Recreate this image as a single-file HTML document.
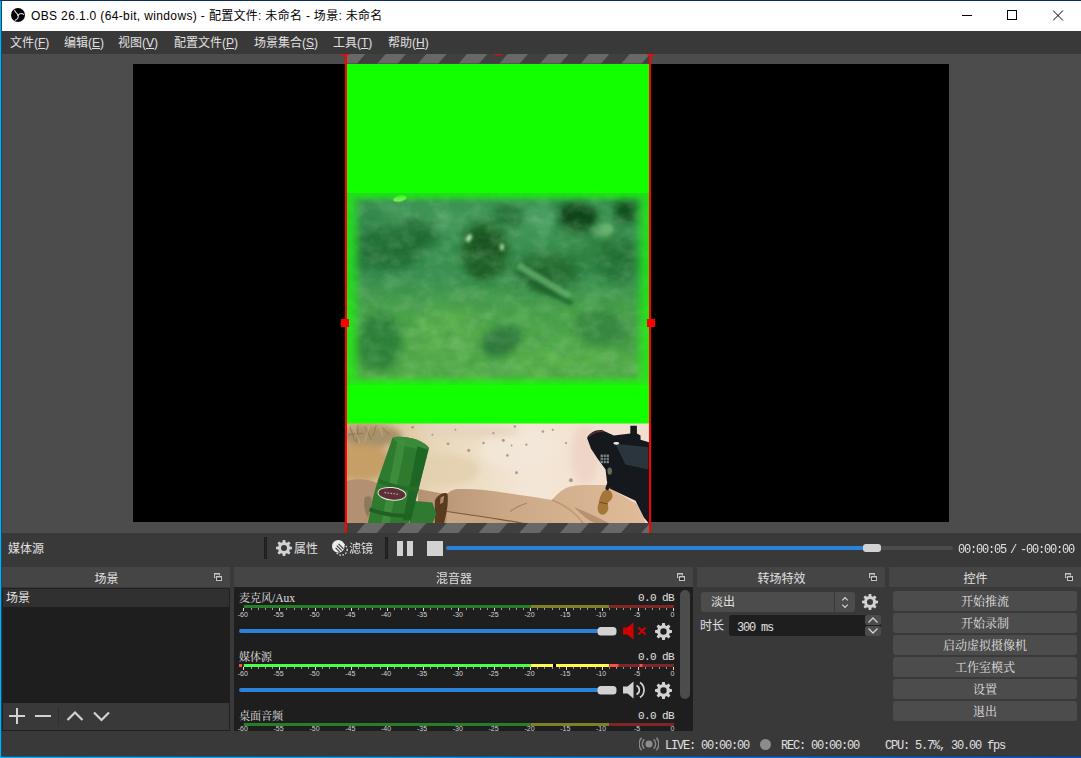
<!DOCTYPE html>
<html lang="zh-CN">
<head>
<meta charset="utf-8">
<title>OBS 26.1.0 (64-bit, windows) - 配置文件: 未命名 - 场景: 未命名</title>
<style>
*{box-sizing:border-box;margin:0;padding:0}
html,body{width:1081px;height:758px;overflow:hidden;background:#3a3939}
body{position:relative;font-family:"Liberation Sans","Noto Sans CJK SC",sans-serif;font-size:12px;color:#e1e0e1;line-height:1}
.abs{position:absolute}
#win{position:absolute;left:0;top:0;width:1081px;height:758px;background:#3a3939;overflow:hidden}
/* window borders */
#bt{left:0;top:0;width:1081px;height:1px;background:#0a2e5a}
#bl{left:0;top:1px;width:1px;height:757px;background:#00b2fd}
#bl2{left:1px;top:1px;width:1px;height:756px;background:#1c4a62}
#bb{left:0;top:757px;width:1081px;height:1px;background:linear-gradient(90deg,#00b4ff,#00a2f4 30%,#0070dc 67%,#0a52c8 100%)}
#bb2{left:1px;top:756px;width:1080px;height:1px;background:linear-gradient(90deg,#1c5a80,#1c5580 30%,#1c4a78 67%,#1c4070 100%)}
/* title */
#title{left:1px;top:1px;width:1080px;height:30px;background:#fff;color:#000}
#title .txt{position:absolute;left:30px;top:9.3px;font-size:12px;white-space:nowrap;letter-spacing:0}
/* menu */
#menu{left:1px;top:31px;width:1080px;height:23px;background:#3a3939}
#menu span{position:absolute;top:6.2px;font-size:12px;white-space:nowrap;color:#e1e0e1}
#menu u{text-decoration:underline;text-underline-offset:0.5px}
/* preview */
#pv{left:2px;top:54px;width:1079px;height:479px;background:#4c4c4c;overflow:hidden}
#canvas{left:131px;top:10px;width:816px;height:458px;background:#000}
.dock-t{position:absolute;height:20px;background:#464546;text-align:center;font-size:12px;line-height:20px;color:#e1e0e1;padding-right:19px}
.dock-t span{position:relative;top:1.5px}
.dark{background:#1f1e1f}
.btn{position:absolute;left:893px;width:184px;height:20px;background:#4c4c4c;border-radius:3px;text-align:center;line-height:20px;font-size:12px;font-family:"Noto Serif CJK SC","Liberation Serif",serif}
.song{font-family:"Noto Serif CJK SC","Liberation Serif",serif}
.mono{font-family:"Liberation Mono",monospace;font-size:12px;letter-spacing:-1.2px;white-space:pre;margin-top:1.5px}
</style>
</head>
<body>
<div id="win">
  <div id="title" class="abs">
    <svg class="abs" style="left:10px;top:7px" width="14" height="14" viewBox="0 0 14 14"><circle cx="7" cy="7" r="7" fill="#000"/><g fill="none" stroke="#e4e4e4" stroke-width="1.05" stroke-linecap="round"><path d="M7 7.300 C6.600 5.300 4.200 5 3.700 2.300"/><path d="M7 7.300 C8.400 5.600 10.800 5 12.700 6.400"/><path d="M7 7.300 C7.800 9.400 6.400 11.300 4.200 12.300"/></g></svg>
    <span class="txt"><span style="letter-spacing:.36px">OBS 26.1.0 (64-bit, windows) - </span><span style="letter-spacing:.3px">配置文件: 未命名 - 场景: 未命名</span></span>
    <svg class="abs" style="left:961px;top:14px" width="10" height="1"><rect width="10" height="1" fill="#000"/></svg>
    <svg class="abs" style="left:1006px;top:9px" width="10" height="10"><rect x=".5" y=".5" width="9" height="9" fill="none" stroke="#000" stroke-width="1"/></svg>
    <svg class="abs" style="left:1052px;top:9px" width="11" height="11"><path d="M0 .5 L10 10.500 M10 .5 L0 10.500" stroke="#000" stroke-width="1" fill="none"/></svg>
  </div>
  <div id="menu" class="abs">
    <span style="left:9px">文件(<u>F</u>)</span>
    <span style="left:63px">编辑(<u>E</u>)</span>
    <span style="left:117px">视图(<u>V</u>)</span>
    <span style="left:173px">配置文件(<u>P</u>)</span>
    <span style="left:253px">场景集合(<u>S</u>)</span>
    <span style="left:332px">工具(<u>T</u>)</span>
    <span style="left:387px">帮助(<u>H</u>)</span>
  </div>
  <div id="pv" class="abs">
    <div id="canvas" class="abs"></div>
<!--PV-START--><svg class="abs" style="left:0;top:0" width="1079" height="479" viewBox="2 54 1079 479">
<defs>
<clipPath id="cs"><rect x="345" y="54" width="306" height="479"/></clipPath>
<clipPath id="cv"><rect x="347" y="193" width="302" height="192"/></clipPath>
<clipPath id="cp"><rect x="347" y="423.5" width="302" height="99.5"/></clipPath>
<filter id="b8" x="-20%" y="-20%" width="140%" height="140%"><feGaussianBlur stdDeviation="6"/></filter>
<filter id="b4" x="-20%" y="-20%" width="140%" height="140%"><feGaussianBlur stdDeviation="3"/></filter>
<filter id="b2" x="-20%" y="-20%" width="140%" height="140%"><feGaussianBlur stdDeviation="1.5"/></filter>
<filter id="b1" x="-20%" y="-20%" width="140%" height="140%"><feGaussianBlur stdDeviation="0.7"/></filter>
<filter id="fe" x="-5%" y="-5%" width="110%" height="110%"><feGaussianBlur stdDeviation="4 2.7"/></filter>
<mask id="mv" maskUnits="userSpaceOnUse" x="340" y="185" width="320" height="210"><rect x="347" y="193" width="302" height="192" fill="#505050"/><rect x="356" y="199" width="284" height="180" fill="#fff" filter="url(#fe)"/></mask>
<linearGradient id="gv" x1="0" y1="0" x2="0" y2="1"><stop offset="0" stop-color="#3c9556"/><stop offset=".45" stop-color="#3a9150"/><stop offset=".6" stop-color="#4aa34a"/><stop offset="1" stop-color="#58b248"/></linearGradient>
<linearGradient id="gs" x1="0" y1="0" x2="1" y2="0"><stop offset="0" stop-color="#cfae7c"/><stop offset=".3" stop-color="#e9d8bb"/><stop offset=".6" stop-color="#f4e6d6"/><stop offset="1" stop-color="#f1dece"/></linearGradient>
<linearGradient id="gb" gradientUnits="userSpaceOnUse" x1="420" y1="0" x2="640" y2="0"><stop offset="0" stop-color="#b49272"/><stop offset=".4" stop-color="#cba886"/><stop offset="1" stop-color="#dfbb99"/></linearGradient>
<filter id="nz" x="0" y="0" width="100%" height="100%"><feTurbulence type="fractalNoise" baseFrequency="0.07 0.09" numOctaves="3" seed="7"/><feColorMatrix type="matrix" values="0 0 0 0 0.05  0 0 0 0 0.25  0 0 0 0 0.08  1.6 0 0 0 -0.55"/></filter>
<filter id="nz2" x="0" y="0" width="100%" height="100%"><feTurbulence type="fractalNoise" baseFrequency="0.06 0.08" numOctaves="3" seed="23"/><feColorMatrix type="matrix" values="0 0 0 0 0.55  0 0 0 0 0.85  0 0 0 0 0.5  0 1.6 0 0 -0.62"/></filter>
</defs>
<g clip-path="url(#cs)">
<rect x="345" y="54" width="306" height="10" fill="#404040"/><rect x="345" y="523" width="306" height="10" fill="#404040"/>
<g fill="#686868"><path d="M263.67 54 L284.00 54 L275.30 64 L254.97 64Z"/><path d="M304.33 54 L324.67 54 L315.97 64 L295.63 64Z"/><path d="M345.00 54 L365.33 54 L356.63 64 L336.30 64Z"/><path d="M385.67 54 L406.00 54 L397.30 64 L376.97 64Z"/><path d="M426.33 54 L446.67 54 L437.97 64 L417.63 64Z"/><path d="M467.00 54 L487.33 54 L478.63 64 L458.30 64Z"/><path d="M507.67 54 L528.00 54 L519.30 64 L498.97 64Z"/><path d="M548.33 54 L568.67 54 L559.97 64 L539.63 64Z"/><path d="M589.00 54 L609.33 54 L600.63 64 L580.30 64Z"/><path d="M629.67 54 L650.00 54 L641.30 64 L620.97 64Z"/><path d="M283.97 523 L304.30 523 L295.60 533 L275.27 533Z"/><path d="M324.63 523 L344.97 523 L336.27 533 L315.93 533Z"/><path d="M365.30 523 L385.63 523 L376.93 533 L356.60 533Z"/><path d="M405.97 523 L426.30 523 L417.60 533 L397.27 533Z"/><path d="M446.63 523 L466.97 523 L458.27 533 L437.93 533Z"/><path d="M487.30 523 L507.63 523 L498.93 533 L478.60 533Z"/><path d="M527.97 523 L548.30 523 L539.60 533 L519.27 533Z"/><path d="M568.63 523 L588.97 523 L580.27 533 L559.93 533Z"/><path d="M609.30 523 L629.63 523 L620.93 533 L600.60 533Z"/><path d="M649.97 523 L670.30 523 L661.60 533 L641.27 533Z"/></g>
<rect x="347" y="64" width="302" height="459" fill="#12ff00"/>
<rect x="347" y="63" width="302" height="1" fill="#5a3d5a" opacity=".6"/>
<g mask="url(#mv)"><g clip-path="url(#cv)">
<rect x="340" y="185" width="320" height="210" fill="url(#gv)"/>
<g filter="url(#b8)">
<ellipse cx="392" cy="246" rx="34" ry="20" fill="#1d6631" opacity="0.9"/>
<ellipse cx="428" cy="232" rx="12" ry="14" fill="#1a5f2c" opacity="0.8"/>
<ellipse cx="372" cy="262" rx="16" ry="10" fill="#1d6631" opacity="0.7"/>
<ellipse cx="485" cy="250" rx="24" ry="30" fill="#16581e" opacity="0.9"/>
<ellipse cx="577" cy="217" rx="20" ry="15" fill="#0c4214" opacity="0.95"/>
<ellipse cx="626" cy="211" rx="12" ry="13" fill="#124f1a" opacity="0.9"/>
<ellipse cx="547" cy="272" rx="32" ry="20" fill="#1d642b" opacity="0.85"/>
<ellipse cx="620" cy="262" rx="18" ry="22" fill="#1f6a30" opacity="0.7"/>
<ellipse cx="600" cy="255" rx="30" ry="22" fill="#2a7836" opacity="0.6"/>
<ellipse cx="378" cy="343" rx="22" ry="30" fill="#2a7a36" opacity="0.7"/>
<ellipse cx="498" cy="342" rx="18" ry="15" fill="#2b7a3a" opacity="0.7"/>
<ellipse cx="606" cy="330" rx="30" ry="20" fill="#36883a" opacity="0.6"/>
<ellipse cx="450" cy="330" rx="40" ry="22" fill="#5aae4a" opacity="0.6"/>
<ellipse cx="560" cy="360" rx="60" ry="16" fill="#58b048" opacity="0.6"/>
<ellipse cx="430" cy="215" rx="50" ry="12" fill="#469c5c" opacity="0.5"/>
<ellipse cx="520" cy="222" rx="18" ry="18" fill="#4c9c60" opacity="0.5"/>
<ellipse cx="372" cy="225" rx="14" ry="20" fill="#2c7a40" opacity="0.5"/>
</g>
<g filter="url(#b4)">
<ellipse cx="579" cy="216" rx="16" ry="11" fill="#0c4216" opacity="0.9" transform="rotate(15 579 216)"/>
<ellipse cx="625" cy="212" rx="9" ry="11" fill="#12501c" opacity="0.85" transform="rotate(0 625 212)"/>
<ellipse cx="509" cy="216" rx="15" ry="11" fill="#1c6230" opacity="0.7" transform="rotate(10 509 216)"/>
<ellipse cx="485" cy="245" rx="14" ry="13" fill="#144f1c" opacity="0.85" transform="rotate(0 485 245)"/>
<ellipse cx="480" cy="268" rx="12" ry="9" fill="#1a5a24" opacity="0.7" transform="rotate(0 480 268)"/>
<ellipse cx="412" cy="226" rx="11" ry="10" fill="#1f6834" opacity="0.75" transform="rotate(0 412 226)"/>
<ellipse cx="368" cy="240" rx="9" ry="8" fill="#1f6834" opacity="0.7" transform="rotate(0 368 240)"/>
<ellipse cx="397" cy="261" rx="20" ry="10" fill="#246f38" opacity="0.7" transform="rotate(-8 397 261)"/>
<ellipse cx="615" cy="256" rx="18" ry="20" fill="#226c32" opacity="0.6" transform="rotate(20 615 256)"/>
<ellipse cx="542" cy="280" rx="24" ry="9" fill="#1a5c26" opacity="0.75" transform="rotate(32 542 280)"/>
<ellipse cx="380" cy="342" rx="20" ry="26" fill="#2a7a34" opacity="0.6" transform="rotate(10 380 342)"/>
<ellipse cx="502" cy="341" rx="20" ry="13" fill="#266f36" opacity="0.7" transform="rotate(-20 502 341)"/>
<ellipse cx="600" cy="327" rx="26" ry="16" fill="#31823a" opacity="0.6" transform="rotate(10 600 327)"/>
<ellipse cx="543" cy="219" rx="13" ry="14" fill="#58aa70" opacity="0.6" transform="rotate(0 543 219)"/>
<ellipse cx="604" cy="230" rx="9" ry="8" fill="#6ab872" opacity="0.7" transform="rotate(0 604 230)"/>
<ellipse cx="446" cy="222" rx="16" ry="11" fill="#4a9e62" opacity="0.5" transform="rotate(0 446 222)"/>
<ellipse cx="442" cy="338" rx="34" ry="28" fill="#5eb24e" opacity="0.55" transform="rotate(0 442 338)"/>
<ellipse cx="542" cy="363" rx="26" ry="11" fill="#5cb44c" opacity="0.6" transform="rotate(0 542 363)"/>
<ellipse cx="470" cy="300" rx="60" ry="10" fill="#4da452" opacity="0.4" transform="rotate(0 470 300)"/>
</g>
<rect x="347" y="190" width="302" height="198" filter="url(#nz)" opacity=".4"/><rect x="347" y="190" width="302" height="198" filter="url(#nz2)" opacity=".22"/>
<ellipse cx="400" cy="198.5" rx="7" ry="3" fill="#98e868" filter="url(#b1)" transform="rotate(-12 400 198.5)"/>
<g filter="url(#b2)"><ellipse cx="469" cy="238" rx="2.500" ry="4" fill="#b8e0b0" transform="rotate(25 469 238)"/><ellipse cx="502" cy="247" rx="2" ry="3.500" fill="#a8d8a0"/><ellipse cx="607" cy="229" rx="6" ry="5" fill="#6ab070"/><path d="M520 262 L572 294 L566 298 L516 268Z" fill="#62b26a" opacity=".8"/><path d="M530 278 L575 302 L570 306 L526 284Z" fill="#1f6428" opacity=".7"/></g>
</g></g>
</g>
<g clip-path="url(#cp)">
<rect x="347" y="423" width="302" height="101" fill="url(#gs)"/>
<g filter="url(#b4)">
<ellipse cx="372" cy="436" rx="30" ry="11" fill="#a8916a"/>
<ellipse cx="362" cy="462" rx="30" ry="18" fill="#c59f66"/>
<ellipse cx="440" cy="470" rx="40" ry="16" fill="#e2cfae" opacity=".8"/>
<ellipse cx="585" cy="455" rx="14" ry="30" fill="#edd2c6" opacity=".8"/>
<ellipse cx="520" cy="450" rx="40" ry="20" fill="#f3e7da" opacity=".8"/>
<ellipse cx="470" cy="432" rx="50" ry="6" fill="#e4d3bb" opacity=".8"/>
</g>
<!-- sandbags unified (page coords) -->
<path d="M418 489 L445 494 L448 493 C452 490 455 489 458 489 C475 488.500 490 490.500 503 492.500 L537 497.500 L552 500 C558 493 563 488.500 570 486.700 C576 485.300 582 485 587 485 L606 485 C610 487 613 490 616 492 L637 504 L646 524 L418 524Z" fill="url(#gb)"/>
<path d="M447 511.500 C470 515 500 519 524 523.500 L447 524Z" fill="#c9a683"/>
<path d="M447 511.500 C470 515 500 519 524 523.500" stroke="#7a5a3c" stroke-width="1.200" fill="none"/>
<path d="M510 511.500 C516 507 522 504.500 527 503" stroke="#a98663" stroke-width="1.200" fill="none"/>
<path d="M552 500 C562 504 570 509 576 515 C580 519 582 522 584 524" stroke="#b8926e" stroke-width="1.500" fill="none" opacity=".8"/>
<path d="M574 507 C580 514 588 520 596 524 L610 524 C600 518 586 512 574 507Z" fill="#b08a66" opacity=".8"/>
<g transform="translate(340,415) scale(0.164948)">
 <!-- left sandbag -->
 <path d="M40 400 C100 380 190 390 240 420 L200 660 L40 660Z" fill="#b39072"/>
 <path d="M150 500 C180 480 200 500 190 540 L170 620 C150 600 140 540 150 500Z" fill="#8e7a5a" filter="url(#b2)"/>
 <!-- bracket plate -->
 <path d="M575 520 C590 480 640 460 652 480 C660 540 640 620 630 660 L575 660Z" fill="#5b3b1f"/>
 <path d="M610 500 L632 490 L625 530 L606 540Z" fill="#b08c62"/>
 <path d="M440 520 L560 530 L585 600 L560 660 L420 660Z" fill="#2f7a30"/>
 <!-- tube -->
 <path d="M318 140 C350 118 500 140 540 200 L478 440 L430 620 L415 660 L168 660 L200 500 L228 400Z" fill="#2e7b2f"/>
 <path d="M318 140 C350 118 500 140 540 200 C500 215 360 200 318 140Z" fill="#3a8a3a"/>
 <path d="M350 150 L400 150 L300 660 L250 660Z" fill="#3f9140" opacity=".8" filter="url(#b2)"/>
 <path d="M470 190 L535 210 L430 640 L380 640Z" fill="#1f6424" opacity=".85" filter="url(#b2)"/>
 <path d="M236 385 C300 420 420 440 480 436 L474 462 C410 462 290 440 232 410Z" fill="#256c28"/>
 <path d="M182 560 C260 590 360 605 438 598 L432 622 C350 628 250 612 176 584Z" fill="#215f25"/>
 <ellipse cx="315" cy="478" rx="85" ry="38" fill="#5c3036" stroke="#e8e8e0" stroke-width="6" transform="rotate(6 315 478)"/>
 <path d="M270 470 L360 482" stroke="#b89aa0" stroke-width="8" stroke-dasharray="10 8"/>
 <!-- grass strands -->
 <g stroke="#7d6a48" stroke-width="5" opacity=".7"><path d="M60 70 L90 160M110 60 L100 170M150 70 L190 150M220 60 L200 130M260 80 L300 120M50 120 L140 110"/></g>
 <g stroke="#d8c8a0" stroke-width="4" opacity=".7"><path d="M80 70 L120 170M180 60 L150 160M240 70 L260 130"/></g>
 <g fill="#9a8468" opacity=".7"><circle cx="655" cy="175" r="9"/><circle cx="560" cy="120" r="6"/><circle cx="870" cy="170" r="8"/><circle cx="930" cy="110" r="7"/><circle cx="440" cy="75" r="9"/><circle cx="700" cy="90" r="6"/><circle cx="780" cy="215" r="10"/></g>
</g>
<g transform="translate(500,415) scale(0.164948)">
 <g fill="#8a7560" opacity=".65"><circle cx="20" cy="155" r="9"/><circle cx="45" cy="245" r="8"/><circle cx="100" cy="350" r="9"/><circle cx="160" cy="180" r="7"/><circle cx="260" cy="100" r="8"/><circle cx="320" cy="90" r="7"/><circle cx="90" cy="70" r="8"/><circle cx="400" cy="170" r="7"/><circle cx="430" cy="395" r="12"/><circle cx="70" cy="185" r="6"/></g>
 <!-- fingers -->
 <path d="M620 470 C640 440 680 450 682 490 C680 520 660 520 650 540 C665 560 655 600 620 605 C590 600 585 560 600 530 C605 500 610 490 620 470Z" fill="#a67538"/>
 <path d="M600 528 L655 540" stroke="#6a4a22" stroke-width="6"/>
 <!-- gun -->
 <path d="M528 140 C540 110 580 88 620 92 L690 125 L790 112 L790 65 L830 65 L830 112 L852 125 L852 150 L905 165 L905 660 L872 622 L822 520 L700 462 L665 445 L648 400 L640 330 L590 262 L552 205 Z" fill="#15191d"/>
 <path d="M700 175 L900 195 L900 330 L760 300 Z" fill="#2a363e" filter="url(#b2)"/>
 <path d="M668 395 L650 445" stroke="#15191d" stroke-width="22" stroke-linecap="round"/>
 <rect x="610" y="240" width="50" height="52" fill="#9aa4a4" opacity=".8"/>
 <path d="M610 258H660M610 275H660M627 240V292M644 240V292" stroke="#15191d" stroke-width="5"/>
 <ellipse cx="705" cy="172" rx="18" ry="8" fill="#e8ecec"/>
 <ellipse cx="665" cy="340" rx="14" ry="22" fill="#6a6a5a"/>
 <path d="M540 130 C560 105 600 95 630 100" stroke="#5a3030" stroke-width="8" fill="none"/>
</g>
</g>

<g fill="#ff0000"><rect x="345" y="54" width="2" height="479"/><rect x="649" y="54" width="2" height="479"/>
<rect x="341" y="54" width="8" height="1"/><rect x="494" y="54" width="8" height="1"/><rect x="647" y="54" width="8" height="1"/>
<rect x="341" y="319" width="8" height="8"/><rect x="647" y="319" width="8" height="8"/></g>
</svg><!--PV-END-->
  </div>
  <!--UI-START-->
<div class="abs" style="left:8px;top:543px;font-size:12px;white-space:nowrap">媒体源</div>
<div class="abs" style="left:264px;top:537px;width:3px;height:22px;background:#2a2a2a;border:1px solid #1c1c1c"></div>
<svg class="abs" style="left:276px;top:540px" width="16" height="16" viewBox="0 0 16 16"><path d="M6.45 2.20 L6.73 -0.00 L9.27 -0.00 L9.55 2.20 L11.00 2.80 L12.76 1.45 L14.55 3.24 L13.20 5.00 L13.80 6.45 L16.00 6.73 L16.00 9.27 L13.80 9.55 L13.20 11.00 L14.55 12.76 L12.76 14.55 L11.00 13.20 L9.55 13.80 L9.27 16.00 L6.73 16.00 L6.45 13.80 L5.00 13.20 L3.24 14.55 L1.45 12.76 L2.80 11.00 L2.20 9.55 L-0.00 9.27 L-0.00 6.73 L2.20 6.45 L2.80 5.00 L1.45 3.24 L3.24 1.45 L5.00 2.80Z M11.00 8 A3.0 3.0 0 1 0 5.00 8 A3.0 3.0 0 1 0 11.00 8Z" fill="#d2d2d2" fill-rule="evenodd"/></svg>
<div class="abs" style="left:294px;top:543px;font-size:12px;white-space:nowrap">属性</div>
<svg class="abs" style="left:332px;top:540px" width="16" height="16" viewBox="0 0 16 16"><circle cx="9.500" cy="9.500" r="5.700" fill="none" stroke="#e0e0e0" stroke-width="1.300" stroke-dasharray="1.600 1.500"/><circle cx="6.300" cy="6.300" r="6.300" fill="#ececec"/><g stroke="#3a3939" stroke-width="1.200" stroke-linecap="butt"><path d="M6.500 3.800 L11.500 8.800M4.800 5.600 L9.800 10.600M3.600 7.900 L7.600 11.900"/></g></svg>
<div class="abs" style="left:349px;top:543px;font-size:12px;white-space:nowrap">滤镜</div>
<div class="abs" style="left:385px;top:537px;width:3px;height:22px;background:#2a2a2a;border:1px solid #1c1c1c"></div>
<div class="abs" style="left:397px;top:540.5px;width:6px;height:15px;background:#d2d2d2"></div>
<div class="abs" style="left:407px;top:540.5px;width:6px;height:15px;background:#d2d2d2"></div>
<div class="abs" style="left:427px;top:540.5px;width:15.5px;height:15px;background:#d2d2d2"></div>
<div class="abs" style="left:446px;top:546px;width:507px;height:4px;background:#4c4c4c;border-radius:2px"></div>
<div class="abs" style="left:446px;top:546px;width:420px;height:4px;background:#2a82da;border-radius:2px"></div>
<div class="abs" style="left:863px;top:544px;width:18px;height:8px;background:#d2d2d2;border-radius:3px"></div>
<div class="abs mono" style="left:958px;top:542px;word-spacing:-2px">00:00:05 / -00:00:00</div>
<div class="dock-t" style="left:2px;top:567px;width:228px"><span>场景</span></div>
<svg class="abs" style="left:214px;top:573px" width="9" height="9" viewBox="0 0 9 9"><rect x="0" y="0" width="6" height="5" fill="#c4c4c4"/><rect x="1" y="1.500" width="4" height="2.500" fill="#464546"/><rect x="1.500" y="2.500" width="7" height="6" fill="#464546"/><rect x="2" y="3" width="6" height="5" fill="#c4c4c4"/><rect x="3" y="4.500" width="4" height="2.500" fill="#2e2e2e"/></svg>
<div class="dock-t" style="left:234px;top:567px;width:459px"><span>混音器</span></div>
<svg class="abs" style="left:677px;top:573px" width="9" height="9" viewBox="0 0 9 9"><rect x="0" y="0" width="6" height="5" fill="#c4c4c4"/><rect x="1" y="1.500" width="4" height="2.500" fill="#464546"/><rect x="1.500" y="2.500" width="7" height="6" fill="#464546"/><rect x="2" y="3" width="6" height="5" fill="#c4c4c4"/><rect x="3" y="4.500" width="4" height="2.500" fill="#2e2e2e"/></svg>
<div class="dock-t" style="left:697px;top:567px;width:188px"><span>转场特效</span></div>
<svg class="abs" style="left:869px;top:573px" width="9" height="9" viewBox="0 0 9 9"><rect x="0" y="0" width="6" height="5" fill="#c4c4c4"/><rect x="1" y="1.500" width="4" height="2.500" fill="#464546"/><rect x="1.500" y="2.500" width="7" height="6" fill="#464546"/><rect x="2" y="3" width="6" height="5" fill="#c4c4c4"/><rect x="3" y="4.500" width="4" height="2.500" fill="#2e2e2e"/></svg>
<div class="dock-t" style="left:889px;top:567px;width:192px"><span>控件</span></div>
<svg class="abs" style="left:1065px;top:573px" width="9" height="9" viewBox="0 0 9 9"><rect x="0" y="0" width="6" height="5" fill="#c4c4c4"/><rect x="1" y="1.500" width="4" height="2.500" fill="#464546"/><rect x="1.500" y="2.500" width="7" height="6" fill="#464546"/><rect x="2" y="3" width="6" height="5" fill="#c4c4c4"/><rect x="3" y="4.500" width="4" height="2.500" fill="#2e2e2e"/></svg>
<div class="abs" style="left:2px;top:588px;width:228px;height:143px;background:#3a3939;border:1px solid #212121"></div>
<div class="abs dark" style="left:3px;top:589px;width:226px;height:114px"></div>
<div class="abs" style="left:3px;top:589px;width:226px;height:18px;background:#303030"></div>
<div class="abs" style="left:6px;top:592px;font-size:12px;white-space:nowrap">场景</div>
<svg class="abs" style="left:3px;top:703px" width="226" height="27" viewBox="3 703 226 27"><g stroke="#d2d2d2" stroke-width="2" fill="none"><path d="M9 716H25M17 708V724"/><path d="M35 716H51"/><path d="M67.500 720 L75 712.500 L82.500 720" stroke-width="2.200"/><path d="M94 712.500 L101.500 720 L109 712.500" stroke-width="2.200"/></g><rect x="58" y="707" width="1" height="19" fill="#2e2e2e"/></svg>
<div class="abs dark" style="left:234px;top:587px;width:459px;height:144px;overflow:hidden">
<svg class="abs" style="left:0;top:0" width="459" height="144" viewBox="234 587 459 144">
<rect x="243.8" y="605" width="286.7" height="3" fill="#267f26"/><rect x="530.5" y="605" width="78.8" height="3" fill="#7f7f26"/><rect x="609.3" y="605" width="64.5" height="3" fill="#7f2626"/><rect x="243" y="608" width="1" height="3" fill="#dcdcdc"/><text x="242.8" y="617" text-anchor="middle" font-size="7" fill="#d2d2d2" font-family="Liberation Sans,sans-serif">-60</text><rect x="251" y="608" width="1" height="2" fill="#9a9a9a"/><rect x="258" y="608" width="1" height="2" fill="#9a9a9a"/><rect x="265" y="608" width="1" height="2" fill="#9a9a9a"/><rect x="272" y="608" width="1" height="2" fill="#9a9a9a"/><rect x="279" y="608" width="1" height="3" fill="#dcdcdc"/><text x="278.6" y="617" text-anchor="middle" font-size="7" fill="#d2d2d2" font-family="Liberation Sans,sans-serif">-55</text><rect x="286" y="608" width="1" height="2" fill="#9a9a9a"/><rect x="294" y="608" width="1" height="2" fill="#9a9a9a"/><rect x="301" y="608" width="1" height="2" fill="#9a9a9a"/><rect x="308" y="608" width="1" height="2" fill="#9a9a9a"/><rect x="315" y="608" width="1" height="3" fill="#dcdcdc"/><text x="314.5" y="617" text-anchor="middle" font-size="7" fill="#d2d2d2" font-family="Liberation Sans,sans-serif">-50</text><rect x="322" y="608" width="1" height="2" fill="#9a9a9a"/><rect x="329" y="608" width="1" height="2" fill="#9a9a9a"/><rect x="337" y="608" width="1" height="2" fill="#9a9a9a"/><rect x="344" y="608" width="1" height="2" fill="#9a9a9a"/><rect x="351" y="608" width="1" height="3" fill="#dcdcdc"/><text x="350.3" y="617" text-anchor="middle" font-size="7" fill="#d2d2d2" font-family="Liberation Sans,sans-serif">-45</text><rect x="358" y="608" width="1" height="2" fill="#9a9a9a"/><rect x="365" y="608" width="1" height="2" fill="#9a9a9a"/><rect x="372" y="608" width="1" height="2" fill="#9a9a9a"/><rect x="380" y="608" width="1" height="2" fill="#9a9a9a"/><rect x="387" y="608" width="1" height="3" fill="#dcdcdc"/><text x="386.1" y="617" text-anchor="middle" font-size="7" fill="#d2d2d2" font-family="Liberation Sans,sans-serif">-40</text><rect x="394" y="608" width="1" height="2" fill="#9a9a9a"/><rect x="401" y="608" width="1" height="2" fill="#9a9a9a"/><rect x="408" y="608" width="1" height="2" fill="#9a9a9a"/><rect x="415" y="608" width="1" height="2" fill="#9a9a9a"/><rect x="423" y="608" width="1" height="3" fill="#dcdcdc"/><text x="422.0" y="617" text-anchor="middle" font-size="7" fill="#d2d2d2" font-family="Liberation Sans,sans-serif">-35</text><rect x="430" y="608" width="1" height="2" fill="#9a9a9a"/><rect x="437" y="608" width="1" height="2" fill="#9a9a9a"/><rect x="444" y="608" width="1" height="2" fill="#9a9a9a"/><rect x="451" y="608" width="1" height="2" fill="#9a9a9a"/><rect x="458" y="608" width="1" height="3" fill="#dcdcdc"/><text x="457.8" y="617" text-anchor="middle" font-size="7" fill="#d2d2d2" font-family="Liberation Sans,sans-serif">-30</text><rect x="466" y="608" width="1" height="2" fill="#9a9a9a"/><rect x="473" y="608" width="1" height="2" fill="#9a9a9a"/><rect x="480" y="608" width="1" height="2" fill="#9a9a9a"/><rect x="487" y="608" width="1" height="2" fill="#9a9a9a"/><rect x="494" y="608" width="1" height="3" fill="#dcdcdc"/><text x="493.6" y="617" text-anchor="middle" font-size="7" fill="#d2d2d2" font-family="Liberation Sans,sans-serif">-25</text><rect x="501" y="608" width="1" height="2" fill="#9a9a9a"/><rect x="509" y="608" width="1" height="2" fill="#9a9a9a"/><rect x="516" y="608" width="1" height="2" fill="#9a9a9a"/><rect x="523" y="608" width="1" height="2" fill="#9a9a9a"/><rect x="530" y="608" width="1" height="3" fill="#dcdcdc"/><text x="529.5" y="617" text-anchor="middle" font-size="7" fill="#d2d2d2" font-family="Liberation Sans,sans-serif">-20</text><rect x="537" y="608" width="1" height="2" fill="#9a9a9a"/><rect x="544" y="608" width="1" height="2" fill="#9a9a9a"/><rect x="552" y="608" width="1" height="2" fill="#9a9a9a"/><rect x="559" y="608" width="1" height="2" fill="#9a9a9a"/><rect x="566" y="608" width="1" height="3" fill="#dcdcdc"/><text x="565.3" y="617" text-anchor="middle" font-size="7" fill="#d2d2d2" font-family="Liberation Sans,sans-serif">-15</text><rect x="573" y="608" width="1" height="2" fill="#9a9a9a"/><rect x="580" y="608" width="1" height="2" fill="#9a9a9a"/><rect x="587" y="608" width="1" height="2" fill="#9a9a9a"/><rect x="595" y="608" width="1" height="2" fill="#9a9a9a"/><rect x="602" y="608" width="1" height="3" fill="#dcdcdc"/><text x="601.1" y="617" text-anchor="middle" font-size="7" fill="#d2d2d2" font-family="Liberation Sans,sans-serif">-10</text><rect x="609" y="608" width="1" height="2" fill="#9a9a9a"/><rect x="616" y="608" width="1" height="2" fill="#9a9a9a"/><rect x="623" y="608" width="1" height="2" fill="#9a9a9a"/><rect x="630" y="608" width="1" height="2" fill="#9a9a9a"/><rect x="638" y="608" width="1" height="3" fill="#dcdcdc"/><text x="637.0" y="617" text-anchor="middle" font-size="7" fill="#d2d2d2" font-family="Liberation Sans,sans-serif">-5</text><rect x="645" y="608" width="1" height="2" fill="#9a9a9a"/><rect x="652" y="608" width="1" height="2" fill="#9a9a9a"/><rect x="659" y="608" width="1" height="2" fill="#9a9a9a"/><rect x="666" y="608" width="1" height="2" fill="#9a9a9a"/><rect x="673" y="608" width="1" height="3" fill="#dcdcdc"/><text x="674.3" y="617" text-anchor="end" font-size="7" fill="#d2d2d2" font-family="Liberation Sans,sans-serif">0</text>
<rect x="243.8" y="664" width="286.7" height="3" fill="#4cff4c"/><rect x="530.5" y="664" width="78.8" height="3" fill="#ffff4c"/><rect x="609.3" y="664" width="64.5" height="3" fill="#7f2626"/><rect x="609.4" y="664" width="9" height="3" fill="#ff4c4c"/><rect x="553" y="664" width="3" height="3" fill="#000"/><rect x="639.5" y="664" width="3" height="3" fill="#ff4c4c"/><rect x="239" y="664" width="3" height="3" fill="#ff4c4c"/><rect x="243" y="667" width="1" height="3" fill="#dcdcdc"/><text x="242.8" y="676" text-anchor="middle" font-size="7" fill="#d2d2d2" font-family="Liberation Sans,sans-serif">-60</text><rect x="251" y="667" width="1" height="2" fill="#9a9a9a"/><rect x="258" y="667" width="1" height="2" fill="#9a9a9a"/><rect x="265" y="667" width="1" height="2" fill="#9a9a9a"/><rect x="272" y="667" width="1" height="2" fill="#9a9a9a"/><rect x="279" y="667" width="1" height="3" fill="#dcdcdc"/><text x="278.6" y="676" text-anchor="middle" font-size="7" fill="#d2d2d2" font-family="Liberation Sans,sans-serif">-55</text><rect x="286" y="667" width="1" height="2" fill="#9a9a9a"/><rect x="294" y="667" width="1" height="2" fill="#9a9a9a"/><rect x="301" y="667" width="1" height="2" fill="#9a9a9a"/><rect x="308" y="667" width="1" height="2" fill="#9a9a9a"/><rect x="315" y="667" width="1" height="3" fill="#dcdcdc"/><text x="314.5" y="676" text-anchor="middle" font-size="7" fill="#d2d2d2" font-family="Liberation Sans,sans-serif">-50</text><rect x="322" y="667" width="1" height="2" fill="#9a9a9a"/><rect x="329" y="667" width="1" height="2" fill="#9a9a9a"/><rect x="337" y="667" width="1" height="2" fill="#9a9a9a"/><rect x="344" y="667" width="1" height="2" fill="#9a9a9a"/><rect x="351" y="667" width="1" height="3" fill="#dcdcdc"/><text x="350.3" y="676" text-anchor="middle" font-size="7" fill="#d2d2d2" font-family="Liberation Sans,sans-serif">-45</text><rect x="358" y="667" width="1" height="2" fill="#9a9a9a"/><rect x="365" y="667" width="1" height="2" fill="#9a9a9a"/><rect x="372" y="667" width="1" height="2" fill="#9a9a9a"/><rect x="380" y="667" width="1" height="2" fill="#9a9a9a"/><rect x="387" y="667" width="1" height="3" fill="#dcdcdc"/><text x="386.1" y="676" text-anchor="middle" font-size="7" fill="#d2d2d2" font-family="Liberation Sans,sans-serif">-40</text><rect x="394" y="667" width="1" height="2" fill="#9a9a9a"/><rect x="401" y="667" width="1" height="2" fill="#9a9a9a"/><rect x="408" y="667" width="1" height="2" fill="#9a9a9a"/><rect x="415" y="667" width="1" height="2" fill="#9a9a9a"/><rect x="423" y="667" width="1" height="3" fill="#dcdcdc"/><text x="422.0" y="676" text-anchor="middle" font-size="7" fill="#d2d2d2" font-family="Liberation Sans,sans-serif">-35</text><rect x="430" y="667" width="1" height="2" fill="#9a9a9a"/><rect x="437" y="667" width="1" height="2" fill="#9a9a9a"/><rect x="444" y="667" width="1" height="2" fill="#9a9a9a"/><rect x="451" y="667" width="1" height="2" fill="#9a9a9a"/><rect x="458" y="667" width="1" height="3" fill="#dcdcdc"/><text x="457.8" y="676" text-anchor="middle" font-size="7" fill="#d2d2d2" font-family="Liberation Sans,sans-serif">-30</text><rect x="466" y="667" width="1" height="2" fill="#9a9a9a"/><rect x="473" y="667" width="1" height="2" fill="#9a9a9a"/><rect x="480" y="667" width="1" height="2" fill="#9a9a9a"/><rect x="487" y="667" width="1" height="2" fill="#9a9a9a"/><rect x="494" y="667" width="1" height="3" fill="#dcdcdc"/><text x="493.6" y="676" text-anchor="middle" font-size="7" fill="#d2d2d2" font-family="Liberation Sans,sans-serif">-25</text><rect x="501" y="667" width="1" height="2" fill="#9a9a9a"/><rect x="509" y="667" width="1" height="2" fill="#9a9a9a"/><rect x="516" y="667" width="1" height="2" fill="#9a9a9a"/><rect x="523" y="667" width="1" height="2" fill="#9a9a9a"/><rect x="530" y="667" width="1" height="3" fill="#dcdcdc"/><text x="529.5" y="676" text-anchor="middle" font-size="7" fill="#d2d2d2" font-family="Liberation Sans,sans-serif">-20</text><rect x="537" y="667" width="1" height="2" fill="#9a9a9a"/><rect x="544" y="667" width="1" height="2" fill="#9a9a9a"/><rect x="552" y="667" width="1" height="2" fill="#9a9a9a"/><rect x="559" y="667" width="1" height="2" fill="#9a9a9a"/><rect x="566" y="667" width="1" height="3" fill="#dcdcdc"/><text x="565.3" y="676" text-anchor="middle" font-size="7" fill="#d2d2d2" font-family="Liberation Sans,sans-serif">-15</text><rect x="573" y="667" width="1" height="2" fill="#9a9a9a"/><rect x="580" y="667" width="1" height="2" fill="#9a9a9a"/><rect x="587" y="667" width="1" height="2" fill="#9a9a9a"/><rect x="595" y="667" width="1" height="2" fill="#9a9a9a"/><rect x="602" y="667" width="1" height="3" fill="#dcdcdc"/><text x="601.1" y="676" text-anchor="middle" font-size="7" fill="#d2d2d2" font-family="Liberation Sans,sans-serif">-10</text><rect x="609" y="667" width="1" height="2" fill="#9a9a9a"/><rect x="616" y="667" width="1" height="2" fill="#9a9a9a"/><rect x="623" y="667" width="1" height="2" fill="#9a9a9a"/><rect x="630" y="667" width="1" height="2" fill="#9a9a9a"/><rect x="638" y="667" width="1" height="3" fill="#dcdcdc"/><text x="637.0" y="676" text-anchor="middle" font-size="7" fill="#d2d2d2" font-family="Liberation Sans,sans-serif">-5</text><rect x="645" y="667" width="1" height="2" fill="#9a9a9a"/><rect x="652" y="667" width="1" height="2" fill="#9a9a9a"/><rect x="659" y="667" width="1" height="2" fill="#9a9a9a"/><rect x="666" y="667" width="1" height="2" fill="#9a9a9a"/><rect x="673" y="667" width="1" height="3" fill="#dcdcdc"/><text x="674.3" y="676" text-anchor="end" font-size="7" fill="#d2d2d2" font-family="Liberation Sans,sans-serif">0</text>
<rect x="243.8" y="723" width="286.7" height="3" fill="#267f26"/><rect x="530.5" y="723" width="78.8" height="3" fill="#7f7f26"/><rect x="609.3" y="723" width="64.5" height="3" fill="#7f2626"/><text x="242.8" y="730.6" text-anchor="middle" font-size="7" fill="#d2d2d2" font-family="Liberation Sans,sans-serif">-60</text><text x="278.6" y="730.6" text-anchor="middle" font-size="7" fill="#d2d2d2" font-family="Liberation Sans,sans-serif">-55</text><text x="314.5" y="730.6" text-anchor="middle" font-size="7" fill="#d2d2d2" font-family="Liberation Sans,sans-serif">-50</text><text x="350.3" y="730.6" text-anchor="middle" font-size="7" fill="#d2d2d2" font-family="Liberation Sans,sans-serif">-45</text><text x="386.1" y="730.6" text-anchor="middle" font-size="7" fill="#d2d2d2" font-family="Liberation Sans,sans-serif">-40</text><text x="422.0" y="730.6" text-anchor="middle" font-size="7" fill="#d2d2d2" font-family="Liberation Sans,sans-serif">-35</text><text x="457.8" y="730.6" text-anchor="middle" font-size="7" fill="#d2d2d2" font-family="Liberation Sans,sans-serif">-30</text><text x="493.6" y="730.6" text-anchor="middle" font-size="7" fill="#d2d2d2" font-family="Liberation Sans,sans-serif">-25</text><text x="529.5" y="730.6" text-anchor="middle" font-size="7" fill="#d2d2d2" font-family="Liberation Sans,sans-serif">-20</text><text x="565.3" y="730.6" text-anchor="middle" font-size="7" fill="#d2d2d2" font-family="Liberation Sans,sans-serif">-15</text><text x="601.1" y="730.6" text-anchor="middle" font-size="7" fill="#d2d2d2" font-family="Liberation Sans,sans-serif">-10</text><text x="637.0" y="730.6" text-anchor="middle" font-size="7" fill="#d2d2d2" font-family="Liberation Sans,sans-serif">-5</text><text x="674.3" y="730.6" text-anchor="end" font-size="7" fill="#d2d2d2" font-family="Liberation Sans,sans-serif">0</text>
<rect x="239" y="629" width="370" height="4" rx="2" fill="#2a82da"/>
<rect x="597.500" y="627" width="19" height="8.500" rx="3.500" fill="#d2d2d2"/>
<rect x="239" y="688" width="370" height="4" rx="2" fill="#2a82da"/>
<rect x="597.500" y="686" width="19" height="8.500" rx="3.500" fill="#d2d2d2"/>
<g fill="#d40000"><path d="M623 627.500h4.500l6-5v17l-6-5H623z"/><path d="M638.500 627.500l7 7M645.500 627.500l-7 7" stroke="#d40000" stroke-width="2" fill="none"/></g>
<g fill="#d2d2d2"><path d="M623 686.500h4.500l6-5v17l-6-5H623z"/><path d="M636.500 685.500a5 5 0 010 9M640 682.500a9 9 0 010 15" stroke="#d2d2d2" stroke-width="1.700" fill="none"/></g>
<rect x="680" y="590" width="10" height="109" rx="5" fill="#4c4c4c"/>
</svg>
<svg class="abs" style="left:421px;top:36px" width="17" height="17" viewBox="0 0 16 16"><path d="M6.45 2.20 L6.73 -0.00 L9.27 -0.00 L9.55 2.20 L11.00 2.80 L12.76 1.45 L14.55 3.24 L13.20 5.00 L13.80 6.45 L16.00 6.73 L16.00 9.27 L13.80 9.55 L13.20 11.00 L14.55 12.76 L12.76 14.55 L11.00 13.20 L9.55 13.80 L9.27 16.00 L6.73 16.00 L6.45 13.80 L5.00 13.20 L3.24 14.55 L1.45 12.76 L2.80 11.00 L2.20 9.55 L-0.00 9.27 L-0.00 6.73 L2.20 6.45 L2.80 5.00 L1.45 3.24 L3.24 1.45 L5.00 2.80Z M11.00 8 A3.0 3.0 0 1 0 5.00 8 A3.0 3.0 0 1 0 11.00 8Z" fill="#d2d2d2" fill-rule="evenodd"/></svg>
<svg class="abs" style="left:421px;top:95px" width="17" height="17" viewBox="0 0 16 16"><path d="M6.45 2.20 L6.73 -0.00 L9.27 -0.00 L9.55 2.20 L11.00 2.80 L12.76 1.45 L14.55 3.24 L13.20 5.00 L13.80 6.45 L16.00 6.73 L16.00 9.27 L13.80 9.55 L13.20 11.00 L14.55 12.76 L12.76 14.55 L11.00 13.20 L9.55 13.80 L9.27 16.00 L6.73 16.00 L6.45 13.80 L5.00 13.20 L3.24 14.55 L1.45 12.76 L2.80 11.00 L2.20 9.55 L-0.00 9.27 L-0.00 6.73 L2.20 6.45 L2.80 5.00 L1.45 3.24 L3.24 1.45 L5.00 2.80Z M11.00 8 A3.0 3.0 0 1 0 5.00 8 A3.0 3.0 0 1 0 11.00 8Z" fill="#d2d2d2" fill-rule="evenodd"/></svg>
<div class="abs song" style="left:5px;top:5px;font-size:11px;white-space:nowrap">麦克风<span style="font-family:Liberation Serif,serif;font-size:11.5px">/Aux</span></div>
<div class="abs mono" style="left:404px;top:4.5px;font-size:11px;letter-spacing:-0.6px">0.0 dB</div>
<div class="abs song" style="left:5px;top:64px;font-size:11px;white-space:nowrap">媒体源</div>
<div class="abs mono" style="left:404px;top:63.5px;font-size:11px;letter-spacing:-0.6px">0.0 dB</div>
<div class="abs song" style="left:5px;top:123px;font-size:11px;white-space:nowrap">桌面音频</div>
<div class="abs mono" style="left:404px;top:122.5px;font-size:11px;letter-spacing:-0.6px">0.0 dB</div>
</div>
<div class="abs" style="left:701px;top:592px;width:154px;height:20px;background:#4c4c4c;border-radius:3px"></div>
<div class="abs" style="left:834px;top:592px;width:1px;height:20px;background:#3a3939"></div>
<svg class="abs" style="left:840px;top:596px" width="10" height="13" viewBox="0 0 10 13"><path d="M2.300 4.300L5 1.600L7.700 4.300M2.300 8.700L5 11.400L7.700 8.700" stroke="#dcdcdc" stroke-width="1.050" fill="none"/></svg>
<div class="abs" style="left:711px;top:596px;font-size:12px;white-space:nowrap">淡出</div>
<svg class="abs" style="left:862px;top:594px" width="16" height="16" viewBox="0 0 16 16"><path d="M6.45 2.20 L6.73 -0.00 L9.27 -0.00 L9.55 2.20 L11.00 2.80 L12.76 1.45 L14.55 3.24 L13.20 5.00 L13.80 6.45 L16.00 6.73 L16.00 9.27 L13.80 9.55 L13.20 11.00 L14.55 12.76 L12.76 14.55 L11.00 13.20 L9.55 13.80 L9.27 16.00 L6.73 16.00 L6.45 13.80 L5.00 13.20 L3.24 14.55 L1.45 12.76 L2.80 11.00 L2.20 9.55 L-0.00 9.27 L-0.00 6.73 L2.20 6.45 L2.80 5.00 L1.45 3.24 L3.24 1.45 L5.00 2.80Z M11.00 8 A3.0 3.0 0 1 0 5.00 8 A3.0 3.0 0 1 0 11.00 8Z" fill="#d2d2d2" fill-rule="evenodd"/></svg>
<div class="abs" style="left:700px;top:620px;font-size:12px;white-space:nowrap">时长</div>
<div class="abs dark" style="left:729px;top:615px;width:152px;height:21px;border-radius:3px"></div>
<div class="abs mono" style="left:737px;top:620px">300 ms</div>
<svg class="abs" style="left:865px;top:615px" width="16" height="21" viewBox="0 0 16 21"><rect x="0" y="0" width="16" height="10" rx="2" fill="#4c4c4c"/><rect x="0" y="11" width="16" height="10" rx="2" fill="#4c4c4c"/><path d="M3.500 7.500L8 3L12.500 7.500M3.500 13.500L8 18L12.500 13.500" stroke="#d2d2d2" stroke-width="1.300" fill="none"/></svg>
<div class="btn" style="top:591px">开始推流</div>
<div class="btn" style="top:613px">开始录制</div>
<div class="btn" style="top:635px">启动虚拟摄像机</div>
<div class="btn" style="top:657px">工作室模式</div>
<div class="btn" style="top:679px">设置</div>
<div class="btn" style="top:701px">退出</div>
<svg class="abs" style="left:639px;top:737px" width="20" height="14" viewBox="0 0 20 14"><circle cx="10" cy="7" r="3.600" fill="#8c8c8c"/><g fill="none" stroke="#8c8c8c" stroke-width="1.400"><path d="M5.300 2.300a6.500 6.500 0 000 9.400M14.700 2.300a6.500 6.500 0 010 9.400M2.600 .8a9 9 0 000 12.400M17.400 .8a9 9 0 010 12.400"/></g></svg>
<div class="abs mono" style="left:665px;top:738px">LIVE: 00:00:00</div>
<div class="abs" style="left:760px;top:739px;width:11px;height:11px;border-radius:50%;background:#8c8c8c"></div>
<div class="abs mono" style="left:781px;top:738px">REC: 00:00:00</div>
<div class="abs mono" style="left:885px;top:738px">CPU: 5.7%, 30.00 fps</div>
<!--UI-END-->
  <div id="bt" class="abs"></div><div id="bl2" class="abs"></div><div id="bl" class="abs"></div><div id="bb2" class="abs"></div><div id="bb" class="abs"></div>
</div>
</body>
</html>
